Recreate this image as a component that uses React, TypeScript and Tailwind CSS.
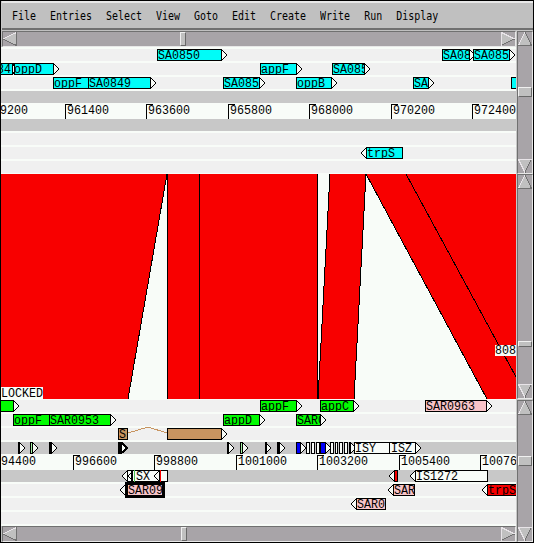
import React from "react";

type Dir = "l" | "r" | "n";
type Feature = {
  x: number;
  w: number;
  fill: string;
  label?: string;
  dir?: Dir;
  dx?: number;
  edge?: number;
  thick?: boolean;
};

const CYAN = "#00fcf8";
const GREEN = "#00fc00";
const PINK = "#f8c4c8";
const BROWN = "#c89460";
const WHITE = "#f8fcf8";
const BLUE = "#0000f8";

const MONO = "font-['Liberation_Mono','DejaVu_Sans_Mono',monospace]";

function Chevron({ dir, left, bold }: { dir: Dir; left: number; bold?: boolean }) {
  return (
    <svg className="absolute top-0 h-3 w-1.5 overflow-visible" style={{ left }} viewBox="0 0 6 12" shapeRendering="crispEdges">
      <path
        d={dir === "r" ? "M0 1L5 6L0 11" : "M6 1L1 6L6 11"}
        fill={WHITE}
        stroke="#000"
        strokeWidth={bold ? 2 : 1}
      />
    </svg>
  );
}

function Box({ f }: { f: Feature }) {
  const dir = f.dir ?? "r";
  return (
    <>
      {dir === "r" && <Chevron dir="r" left={f.x + f.w} bold={f.edge === 3} />}
      {dir === "l" && <Chevron dir="l" left={f.x - 6} />}
      <div
        className={
          f.thick
            ? "absolute -top-0.5 h-4 overflow-hidden border-[3px] border-black"
            : "absolute top-0 h-3 overflow-hidden border border-black"
        }
        style={{ left: f.x, width: f.w, backgroundColor: f.fill }}
      >
        {f.label && (
          <span
            className={`${MONO} absolute -top-px origin-center scale-y-[1.12] whitespace-pre text-[11.667px] leading-[14px] text-black`}
            style={{ left: f.dx ?? 0 }}
          >
            {f.label}
          </span>
        )}
      </div>
    </>
  );
}

function Track({ items = [], grey, children }: { items?: Feature[]; grey?: boolean; children?: React.ReactNode }) {
  return (
    <div className={`relative h-3 shrink-0 ${grey ? "bg-[#c8c8c8]" : "bg-[#f0f0f0]"}`}>
      {items.map((f, i) => (
        <Box key={i} f={f} />
      ))}
      {children}
    </div>
  );
}

function Ruler({ first, marks }: { first: [number, string]; marks: [number, string][] }) {
  return (
    <div className={`${MONO} relative h-4 shrink-0 overflow-hidden bg-[#f8fcf8] text-[11.667px] leading-4 text-black`}>
      <span className="absolute top-0 scale-y-[1.12]" style={{ left: first[0] }}>{first[1]}</span>
      {marks.map(([x, t]) => (
        <div key={x} className="absolute top-px h-[15px] border-l border-black" style={{ left: x }}>
          <div className="absolute left-0 top-0 h-px w-1.5 bg-black" />
          <span className="absolute -top-px left-px scale-y-[1.12]">{t}</span>
        </div>
      ))}
    </div>
  );
}

function Tri({ dir }: { dir: "up" | "down" | "left" | "right" }) {
  const shape = {
    up: ["7,0 0,14 14,14", "M7 0L13.5 13.5H0", "M7 0L0.5 13.5"],
    down: ["0,0 14,0 7,14", "M13.5 0L7 13.5", "M7 13.5L0.5 0.5H14"],
    left: ["0,7 14,0 14,14", "M0 7L13.5 13.5V0", "M0 7L13.5 0.5"],
    right: ["0,0 14,7 0,14", "M0 13.5L13.5 7", "M0.5 14V0.5L13.5 7"],
  }[dir];
  return (
    <svg className="h-3.5 w-3.5 shrink-0" viewBox="0 0 14 14" shapeRendering="crispEdges">
      <polygon points={shape[0]} fill="#c0c0c0" />
      <path d={shape[1]} fill="none" stroke="#707070" />
      <path d={shape[2]} fill="none" stroke="#e8e4e8" />
    </svg>
  );
}

const THUMB = "bg-[#c0c0c0] border border-t-[#f0f0f0] border-l-[#f0f0f0] border-b-[#686868] border-r-[#686868]";

function HScroll({ at }: { at: number }) {
  return (
    <div className="flex h-4 shrink-0 justify-between border border-b-[#e8e8e8] border-l-[#707070] border-r-[#e8e8e8] border-t-[#707070] bg-[#a8a4a8]">
      <Tri dir="left" />
      <div className="relative flex-1">
        <div className={`absolute top-0 h-3.5 w-1.5 ${THUMB}`} style={{ left: at }} />
      </div>
      <Tri dir="right" />
    </div>
  );
}

function VScroll({ at, size }: { at: number; size: number }) {
  return (
    <div className="flex w-4 shrink-0 flex-col justify-between border border-b-[#e8e8e8] border-l-[#707070] border-r-[#e8e8e8] border-t-[#707070] bg-[#a8a4a8]">
      <Tri dir="up" />
      <div className="relative flex-1">
        <div className={`absolute left-0 w-3.5 ${THUMB}`} style={{ top: at, height: size }} />
      </div>
      <Tri dir="down" />
    </div>
  );
}

const f = (x: number, end: number, fill: string, label?: string, extra: Partial<Feature> = {}): Feature => ({
  x,
  w: end - x,
  fill,
  label,
  ...extra,
});

const upper: Feature[][] = [
  [f(156, 221, CYAN, "SA0850"), f(441, 469, CYAN, "SA08"), f(472, 509, CYAN, "SA085")],
  [
    f(-10, 12, CYAN, "84", { dx: 5, edge: 3 }),
    f(13, 53, CYAN, "oppD", { dx: -1 }),
    f(259, 296, CYAN, "appF"),
    f(331, 364, CYAN, "SA085"),
  ],
  [
    f(52, 88, CYAN, "oppF", { dir: "n" }),
    f(87, 150, CYAN, "SA0849"),
    f(222, 259, CYAN, "SA085"),
    f(295, 331, CYAN, "oppB"),
    f(412, 428, CYAN, "SA"),
    f(510, 530, CYAN),
  ],
];

const lower: Feature[][] = [
  [f(-5, 13, GREEN), f(259, 296, GREEN, "appF"), f(319, 353, GREEN, "appC"), f(424, 486, PINK, "SAR0963")],
  [
    f(12, 49, GREEN, "oppF", { dir: "n" }),
    f(48, 110, GREEN, "SAR0953"),
    f(222, 259, GREEN, "appD"),
    f(295, 320, GREEN, "SAR0"),
  ],
  [f(117, 127, BROWN, "S.", { dir: "n" }), f(166, 221, BROWN)],
];

const repeats: Feature[] = [
  f(17, 19, "#000"),
  f(29, 32, "#a0f0a0"),
  f(48, 51, "#000"),
  f(117, 121, "#000", undefined, { edge: 3 }),
  f(226, 228, "#000"),
  f(239, 242, "#a0f0a0"),
  f(264, 265, "#000"),
  f(276, 279, "#000"),
  f(295, 300, BLUE),
  f(305, 309, WHITE, undefined, { dir: "n" }),
  f(310, 314, WHITE, undefined, { dir: "n" }),
  f(315, 319, WHITE, undefined, { dir: "n" }),
  f(319, 325, BLUE),
  f(329, 333, WHITE, undefined, { dir: "n" }),
  f(334, 337, WHITE, undefined, { dir: "n" }),
  f(338, 342, WHITE, undefined, { dir: "n" }),
  f(343, 347, WHITE, undefined, { dir: "n" }),
  f(348, 350, WHITE),
  f(353, 390, WHITE, "ISY", { dir: "n" }),
  f(388, 415, WHITE, "ISZ", { dx: 1 }),
];

const upperMarks: [number, string][] = [
  [64, "961400"], [145, "963600"], [227, "965800"], [308, "968000"], [390, "970200"], [471, "972400"],
];
const lowerMarks: [number, string][] = [
  [72, "996600"], [153, "998800"], [235, "1001000"], [316, "1003200"], [398, "1005400"], [479, "10076"],
];

const menus = ["File", "Entries", "Select", "View", "Goto", "Edit", "Create", "Write", "Run", "Display"];

export default function App() {
  return (
    <div className="flex h-[543px] w-[534px] flex-col overflow-hidden border border-black bg-[#c8c8c8]">
      <nav className="ml-px flex h-[29px] shrink-0 items-center gap-3.5 border-b-2 border-t-2 border-b-[#707070] border-t-[#e8e8e8] bg-[#c0c0c0] pl-2.5 pt-1 font-['DejaVu_Sans_Mono','Liberation_Mono',monospace] text-[9.97px] text-black">
        {menus.map((m) => (
          <span key={m} className="scale-y-[1.18]">{m}</span>
        ))}
      </nav>

      <section className="flex h-[144px] shrink-0">
        <div className="flex w-[515px] shrink-0 flex-col overflow-hidden bg-[#f8fcf8]">
          <div className="bg-[#c0c0c0] pl-px pt-px">
            <HScroll at={163} />
          </div>
          <div className="flex flex-col gap-0.5 pt-0.5">
            {upper.map((row, i) => (
              <Track key={i} items={row} />
            ))}
          </div>
          <div className="mt-0.5 flex flex-col">
            <Track grey />
            <Ruler first={[-1, "9200"]} marks={upperMarks} />
            <Track grey />
          </div>
          <div className="flex flex-col gap-0.5 pt-0.5">
            <Track />
            <Track items={[f(365, 402, CYAN, "trpS", { dir: "l" })]} />
            <Track />
          </div>
        </div>
        <div className="flex pl-px pt-px">
          <VScroll at={41} size={10} />
        </div>
      </section>

      <section className="flex h-[225px] shrink-0">
        <div className="relative w-[515px] shrink-0 bg-[#f8fcf8]">
          <svg className="block h-[225px] w-[515px]" viewBox="1 174 515 225" shapeRendering="crispEdges">
            <g fill="#f80000">
              <path d="M1 174H167L128 399H1Z" />
              <path d="M167 174H318V399H167Z" />
              <path d="M330 174H366L354 399H318Z" />
              <path d="M366 174H516V399H487Z" />
            </g>
            <g stroke="#000" fill="none">
              <path d="M167 174L128 399M167.5 174V399M199.5 174V399M317.5 174V399" />
              <path d="M330 174L318 399M366 174L354 399M366 174L487 399M406 174L516 377" />
            </g>
          </svg>
          <div className="absolute bottom-0 left-0 h-3 bg-[#f8fcf8]">
            <span className={`${MONO} block scale-y-[1.12] text-[11.667px] leading-[14px] text-black`}>LOCKED</span>
          </div>
          <div className="absolute right-0 top-[171px] h-[11px] w-[21px] bg-[#f8fcf8]">
            <span className={`${MONO} block scale-y-[1.12] text-[11.667px] leading-3 text-black`}>808</span>
          </div>
        </div>
        <div className="flex pl-px">
          <VScroll at={152} size={6} />
        </div>
      </section>

      <section className="flex h-[143px] shrink-0">
        <div className="flex w-[515px] shrink-0 flex-col justify-between overflow-hidden bg-[#f8fcf8] pt-px">
          <div className="flex flex-col">
            <div className="flex flex-col gap-0.5">
              {lower.map((row, i) => (
                <Track key={i} items={row}>
                  {i === 2 && (
                    <svg className="absolute left-[127px] top-[-2px] h-3 w-10" viewBox="0 0 40 12" shapeRendering="crispEdges">
                      <path d="M0 7L20 1L39 7" stroke={BROWN} fill="none" />
                    </svg>
                  )}
                </Track>
              ))}
              <Track grey items={repeats} />
            </div>
            <Ruler first={[0, "94400"]} marks={lowerMarks} />
            <Track
              grey
              items={[
                f(126, 167, WHITE, "SX", { dir: "l", dx: 8 }),
                f(393, 397, "#f80000", undefined, { dir: "l" }),
                f(414, 487, WHITE, "IS1272", { dir: "l" }),
              ]}
            >
              <Chevron dir="l" left={126} />
              <div className="absolute left-[130px] top-0 h-3 w-0.5 bg-black" />
              <div className="absolute left-[133px] top-0 h-3 w-px bg-[#50c050]" />
              <Chevron dir="l" left={152} />
              <div className="absolute left-[158px] top-0 h-3 w-0.5 border-l border-black bg-[#f80000]" />
            </Track>
            <div className="mt-0.5 flex flex-col gap-0.5">
              <Track
                items={[
                  f(124, 164, PINK, "SAR09", { dir: "l", thick: true }),
                  f(392, 414, PINK, "SAR", { dir: "l" }),
                  f(486, 530, "#f80000", "trpS", { dir: "l" }),
                ]}
              />
              <Track items={[f(355, 385, PINK, "SAR0", { dir: "l" })]} />
              <Track />
            </div>
          </div>
          <div className="bg-[#c0c0c0] pl-px">
            <HScroll at={164} />
          </div>
        </div>
        <div className="flex pl-px pt-px">
          <VScroll at={41} size={10} />
        </div>
      </section>
    </div>
  );
}
